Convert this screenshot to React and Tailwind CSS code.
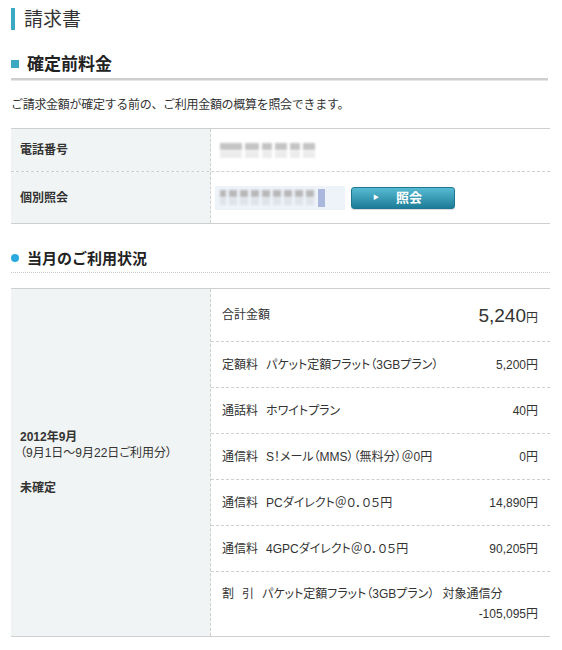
const font = "font-['Liberation_Sans','Noto_Sans_CJK_JP',sans-serif]";

const usage = [
  { kind: '定額料', label: 'パケット定額フラット（3GBプラン）', amount: '5,200円' },
  { kind: '通話料', label: 'ホワイトプラン', amount: '40円' },
  { kind: '通信料', label: 'S！メール（MMS）（無料分）＠0円', amount: '0円' },
  { kind: '通信料', label: 'PCダイレクト＠０．０５円', amount: '14,890円' },
  { kind: '通信料', label: '4GPCダイレクト＠０．０５円', amount: '90,205円' },
];

const Blur = ({ widths, tone }) => (
  <div className="flex gap-[3px]">
    {widths.map((w, i) => (
      <div key={i} className={`h-[7px] ${tone}`} style={{ width: w }} />
    ))}
  </div>
);

export default function App() {
  return (
    <div className={`${font} w-[562px] bg-white pb-[13px] pl-[11px] pr-[12px] text-[12px] text-[#333]`}>
      {/* page title */}
      <div className="mt-[8px] flex h-[22px] items-center">
        <div className="h-[22px] w-[4px] bg-[#3ba9c2]" />
        <h1 className="ml-[9px] text-[19px] leading-none font-normal text-[#333]">請求書</h1>
      </div>

      {/* section 1 */}
      <div className="mt-[24px] flex h-[20px] items-center">
        <div className="h-[8px] w-[8px] bg-[#3ba9c2]" />
        <h2 className="ml-[8px] text-[17px] leading-none font-bold text-[#222]">確定前料金</h2>
      </div>
      <div className="mt-[4px] h-[3px] w-[537px] border-b border-[#e6e6e6] bg-[#cfcfcf]" />

      <p className="mt-[17px] text-[12px] leading-[14px] tracking-[-0.3px]">ご請求金額が確定する前の、ご利用金額の概算を照会できます。</p>

      <div className="mt-[16px] w-[539px] border-y border-[#cfcfcf]">
        <div className="flex h-[43px] border-b border-dashed border-[#cfcfcf]">
          <div className="flex w-[200px] items-center border-r border-dashed border-[#cfcfcf] bg-[#f1f4f4] pl-[9px] font-bold">電話番号</div>
          <div className="flex flex-col justify-center gap-[1px] pl-[9px] blur-[0.8px]">
            <Blur widths={[22, 14, 10, 12, 10, 12]} tone="bg-[#c4c4c4]" />
            <Blur widths={[22, 14, 10, 12, 10, 12]} tone="bg-[#ececec]" />
          </div>
        </div>
        <div className="flex h-[51px]">
          <div className="flex w-[200px] items-center border-r border-dashed border-[#cfcfcf] bg-[#f1f4f4] pl-[9px] font-bold">個別照会</div>
          <div className="flex items-center pl-[4px]">
            <div className="flex h-[24px] w-[130px] items-center bg-[#edf3f9] pl-[5px]">
              <div className="flex flex-col gap-[1px] blur-[0.8px]">
                <Blur widths={[6, 8, 8, 8, 8, 8, 8, 8, 8]} tone="bg-[#b8b8b8]" />
                <Blur widths={[6, 8, 8, 8, 8, 8, 8, 8, 8]} tone="bg-[#dfe3e8]" />
              </div>
              <div className="ml-[4px] h-[18px] w-[7px] bg-[#a9b8dc] blur-[0.5px]" />
            </div>
            <button className="ml-[6px] flex h-[22px] w-[104px] items-center rounded-[3px] border border-[#1f7690] bg-gradient-to-b from-[#56bbd3] to-[#1c7d98] text-[13px] font-bold text-white shadow-[0_1px_1px_rgba(0,0,0,0.15)]">
              <span className="ml-[21px] text-[6px]">▶</span>
              <span className="ml-[17px] leading-none">照会</span>
            </button>
          </div>
        </div>
      </div>

      {/* section 2 */}
      <div className="mt-[24px] flex h-[20px] items-center">
        <div className="h-[8px] w-[8px] rounded-full bg-[#2aa9df]" />
        <h2 className="ml-[8px] text-[15px] leading-none font-bold text-[#222]">当月のご利用状況</h2>
      </div>
      <div className="mt-[4px] w-[539px] border-b border-dotted border-[#c8c8c8]" />

      <div className="mt-[15px] flex w-[539px] border-y border-[#cfcfcf] [font-feature-settings:'palt']">
        <div className="flex w-[200px] flex-col justify-center border-r border-dashed border-[#cfcfcf] bg-[#f1f4f4] pl-[9px] leading-[16px]">
          <div className="font-bold">2012年9月</div>
          <div>（9月1日～9月22日ご利用分）</div>
          <div className="mt-[19px] font-bold">未確定</div>
        </div>
        <div className="flex-1">
          <div className="flex h-[53px] items-center justify-between border-b border-dashed border-[#cfcfcf] pl-[11px] pr-[12px]">
            <span>合計金額</span>
            <span className="text-[19px] leading-none">5,240<span className="text-[12px]">円</span></span>
          </div>
          {usage.map((row) => (
            <div key={row.label} className="flex h-[46px] items-center justify-between border-b border-dashed border-[#cfcfcf] pl-[11px] pr-[12px]">
              <span className="flex gap-[8px]">
                <span>{row.kind}</span>
                <span>{row.label}</span>
              </span>
              <span>{row.amount}</span>
            </div>
          ))}
          <div className="flex h-[64px] flex-col justify-center pl-[11px] pr-[12px] leading-[20px]">
            <span className="flex gap-[8px] whitespace-nowrap">
              <span>割</span>
              <span>引</span>
              <span>パケット定額フラット（3GBプラン）</span>
              <span>対象通信分</span>
            </span>
            <span className="text-right">-105,095円</span>
          </div>
        </div>
      </div>
    </div>
  );
}
